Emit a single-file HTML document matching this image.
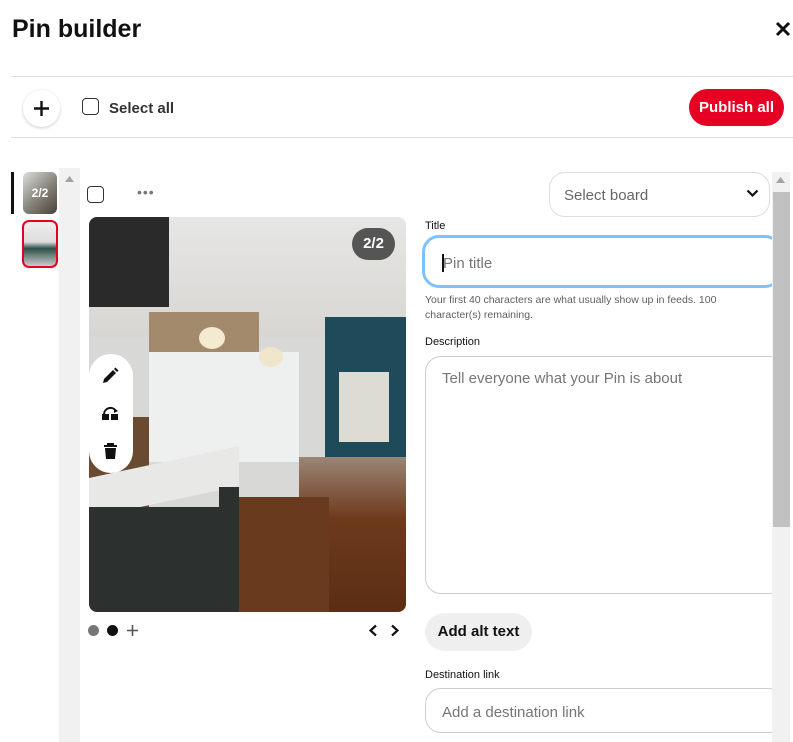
<!DOCTYPE html>
<html><head><style>
*{box-sizing:border-box;margin:0;padding:0}
body{width:793px;height:742px;overflow:hidden;background:#fff;font-family:"Liberation Sans",sans-serif;color:#111;position:relative}
.a{position:absolute}
.lbl{font-size:11px;color:#111}
.box{border:1px solid #cdcdcd;border-radius:16px;background:#fff}
.ph{color:#767676;font-size:15px}
</style></head><body>
<div class="a" style="left:12px;top:15px;font-size:25px;font-weight:bold;">Pin builder</div>
<svg class="a" style="left:775px;top:21px" width="16" height="16" viewBox="0 0 16 16"><path d="M2 2L14 14M14 2L2 14" stroke="#111" stroke-width="3"/></svg>
<div class="a" style="left:11px;top:76px;width:782px;height:1px;background:#ddd"></div>
<div class="a" style="left:23px;top:90px;width:37px;height:37px;border-radius:50%;background:#fff;box-shadow:0 1px 3px rgba(0,0,0,.2)"></div>
<svg class="a" style="left:33px;top:100px" width="17" height="17"><path d="M8.5 1V16M1 8.5H16" stroke="#111" stroke-width="2.4"/></svg>
<div class="a" style="left:82px;top:98px;width:17px;height:17px;border:1.5px solid #333;border-radius:4px"></div>
<div class="a" style="left:109px;top:100px;font-size:15px;font-weight:bold;color:#333">Select all</div>
<div class="a" style="left:689px;top:89px;width:95px;height:37px;border-radius:19px;background:#e60023;color:#fff;font-weight:bold;font-size:15px;text-align:center;line-height:37px">Publish all</div>
<div class="a" style="left:11px;top:137px;width:782px;height:1px;background:#ddd"></div>

<div class="a" style="left:11px;top:172px;width:3px;height:42px;background:#111"></div>
<div class="a" style="left:23px;top:172px;width:34px;height:42px;border-radius:6px;background:linear-gradient(135deg,#ddd 0%,#8a8a80 50%,#4a4038 100%)"><div style="color:#fff;font-weight:bold;font-size:12px;text-align:center;margin-top:14px">2/2</div></div>
<div class="a" style="left:22px;top:220px;width:36px;height:48px;border-radius:7px;border:2px solid #e60023;background:linear-gradient(180deg,#eee 0%,#ddd 45%,#2c5048 60%,#ccc 100%)"></div>
<div class="a" style="left:59px;top:168px;width:21px;height:574px;background:#f1f1f1"></div>
<svg class="a" style="left:65px;top:176px" width="9" height="6"><path d="M0 6L4.5 0L9 6Z" fill="#a3a3a3"/></svg>

<div class="a" style="left:87px;top:186px;width:17px;height:17px;border:1.5px solid #333;border-radius:4px"></div>
<div class="a" style="left:137px;top:184px;font-size:14px;color:#767676;letter-spacing:1px">•••</div>

<div class="a" style="left:89px;top:217px;width:317px;height:395px;border-radius:8px;overflow:hidden;background:#d8d8d6">
 <div class="a" style="left:0;top:0;width:317px;height:120px;background:linear-gradient(180deg,#e6e6e4,#d8d6d2)"></div>
 <div class="a" style="left:0;top:0;width:80px;height:90px;background:#2a2a2a"></div>
 <div class="a" style="left:0;top:200px;width:60px;height:120px;background:#6a4a30"></div>
 <div class="a" style="left:60px;top:95px;width:110px;height:40px;background:#a48a6c"></div>
 <div class="a" style="left:60px;top:135px;width:150px;height:110px;background:#eef0f0"></div>
 <div class="a" style="left:236px;top:100px;width:81px;height:140px;background:#1e4a5a"></div>
 <div class="a" style="left:250px;top:155px;width:50px;height:70px;background:#dcdcd4"></div>
 <div class="a" style="left:110px;top:110px;width:26px;height:22px;border-radius:50%;background:#f4ead0"></div>
 <div class="a" style="left:170px;top:130px;width:24px;height:20px;border-radius:50%;background:#f0e6cc"></div>
 <div class="a" style="left:210px;top:240px;width:107px;height:155px;background:linear-gradient(180deg,#9a8676,#6e3a1c 40%,#5a2e14)"></div>
 <div class="a" style="left:140px;top:280px;width:100px;height:115px;background:#6a3a1e"></div>
 <div class="a" style="left:0;top:245px;width:150px;height:40px;background:#e8e8e6;transform:skewY(-12deg)"></div>
 <div class="a" style="left:0;top:290px;width:130px;height:110px;background:#2c302e"></div>
 <div class="a" style="left:130px;top:270px;width:20px;height:125px;background:#2c302e"></div>
</div>
<div class="a" style="left:352px;top:228px;width:43px;height:32px;border-radius:16px;background:rgba(60,60,60,.85);color:#fff;font-weight:bold;font-size:15px;text-align:center;line-height:32px">2/2</div>
<div class="a" style="left:89px;top:354px;width:44px;height:119px;border-radius:22px;background:#fff"></div>
<svg class="a" style="left:102px;top:367px" width="17" height="17" viewBox="0 0 17 17"><path d="M1 16L2 12L11 3L14 6L5 15Z M12 2L13.5 0.5L16.5 3.5L15 5Z" fill="#111"/></svg>
<svg class="a" style="left:101px;top:405px" width="19" height="16" viewBox="0 0 19 16"><path d="M3 9A6.5 6.5 0 0 1 15 6" stroke="#111" stroke-width="2" fill="none"/><path d="M13 3L17 6L13 8Z" fill="#111"/><rect x="1" y="9" width="7" height="6" fill="#111"/><rect x="10" y="9" width="7" height="6" fill="#111"/></svg>
<svg class="a" style="left:103px;top:443px" width="15" height="17" viewBox="0 0 15 17"><path d="M1 3H14M5 3V1H10V3" stroke="#111" stroke-width="2" fill="none"/><path d="M2 5H13L12 16H3Z" fill="#111"/></svg>

<div class="a" style="left:88px;top:625px;width:11px;height:11px;border-radius:50%;background:#767676"></div>
<div class="a" style="left:107px;top:625px;width:11px;height:11px;border-radius:50%;background:#111"></div>
<svg class="a" style="left:126px;top:624px" width="13" height="13"><path d="M6.5 1V12M1 6.5H12" stroke="#555" stroke-width="1.6"/></svg>
<svg class="a" style="left:368px;top:624px" width="10" height="13"><path d="M8 1.5L2.5 6.5L8 11.5" stroke="#111" stroke-width="2.2" fill="none"/></svg>
<svg class="a" style="left:390px;top:624px" width="10" height="13"><path d="M2 1.5L7.5 6.5L2 11.5" stroke="#111" stroke-width="2.2" fill="none"/></svg>

<div class="a box" style="left:549px;top:172px;width:221px;height:45px;border-color:#ddd"></div>
<div class="a ph" style="left:564px;top:187px;color:#666">Select board</div>
<svg class="a" style="left:746px;top:189px" width="13" height="9"><path d="M1.5 1.5L6.5 6.5L11.5 1.5" stroke="#111" stroke-width="2.2" fill="none"/></svg>
<div class="a lbl" style="left:425px;top:220px">Title</div>
<div class="a" style="left:422px;top:235px;width:360px;height:53px;border:3px solid #7fc1ff;border-radius:17px;background:#fff"></div>
<div class="a" style="left:442px;top:254px;width:1.5px;height:18px;background:#111"></div>
<div class="a ph" style="left:443px;top:255px">Pin title</div>
<div class="a" style="left:425px;top:293px;font-size:10.5px;color:#5f5f5f;line-height:15px;width:350px">Your first 40 characters are what usually show up in feeds. 100 character(s) remaining.</div>
<div class="a lbl" style="left:425px;top:336px">Description</div>
<div class="a box" style="left:425px;top:356px;width:360px;height:238px"></div>
<div class="a ph" style="left:442px;top:370px">Tell everyone what your Pin is about</div>
<div class="a" style="left:425px;top:613px;width:107px;height:38px;border-radius:19px;background:#efefef;font-weight:bold;font-size:15px;text-align:center;line-height:38px">Add alt text</div>
<div class="a lbl" style="left:425px;top:669px">Destination link</div>
<div class="a box" style="left:425px;top:688px;width:360px;height:45px"></div>
<div class="a ph" style="left:442px;top:704px">Add a destination link</div>

<div class="a" style="left:772px;top:172px;width:18px;height:570px;background:#f1f1f1"></div>
<svg class="a" style="left:776px;top:177px" width="9" height="6"><path d="M0 6L4.5 0L9 6Z" fill="#a3a3a3"/></svg>
<div class="a" style="left:773px;top:192px;width:17px;height:335px;background:#c1c1c1"></div>
</body></html>
